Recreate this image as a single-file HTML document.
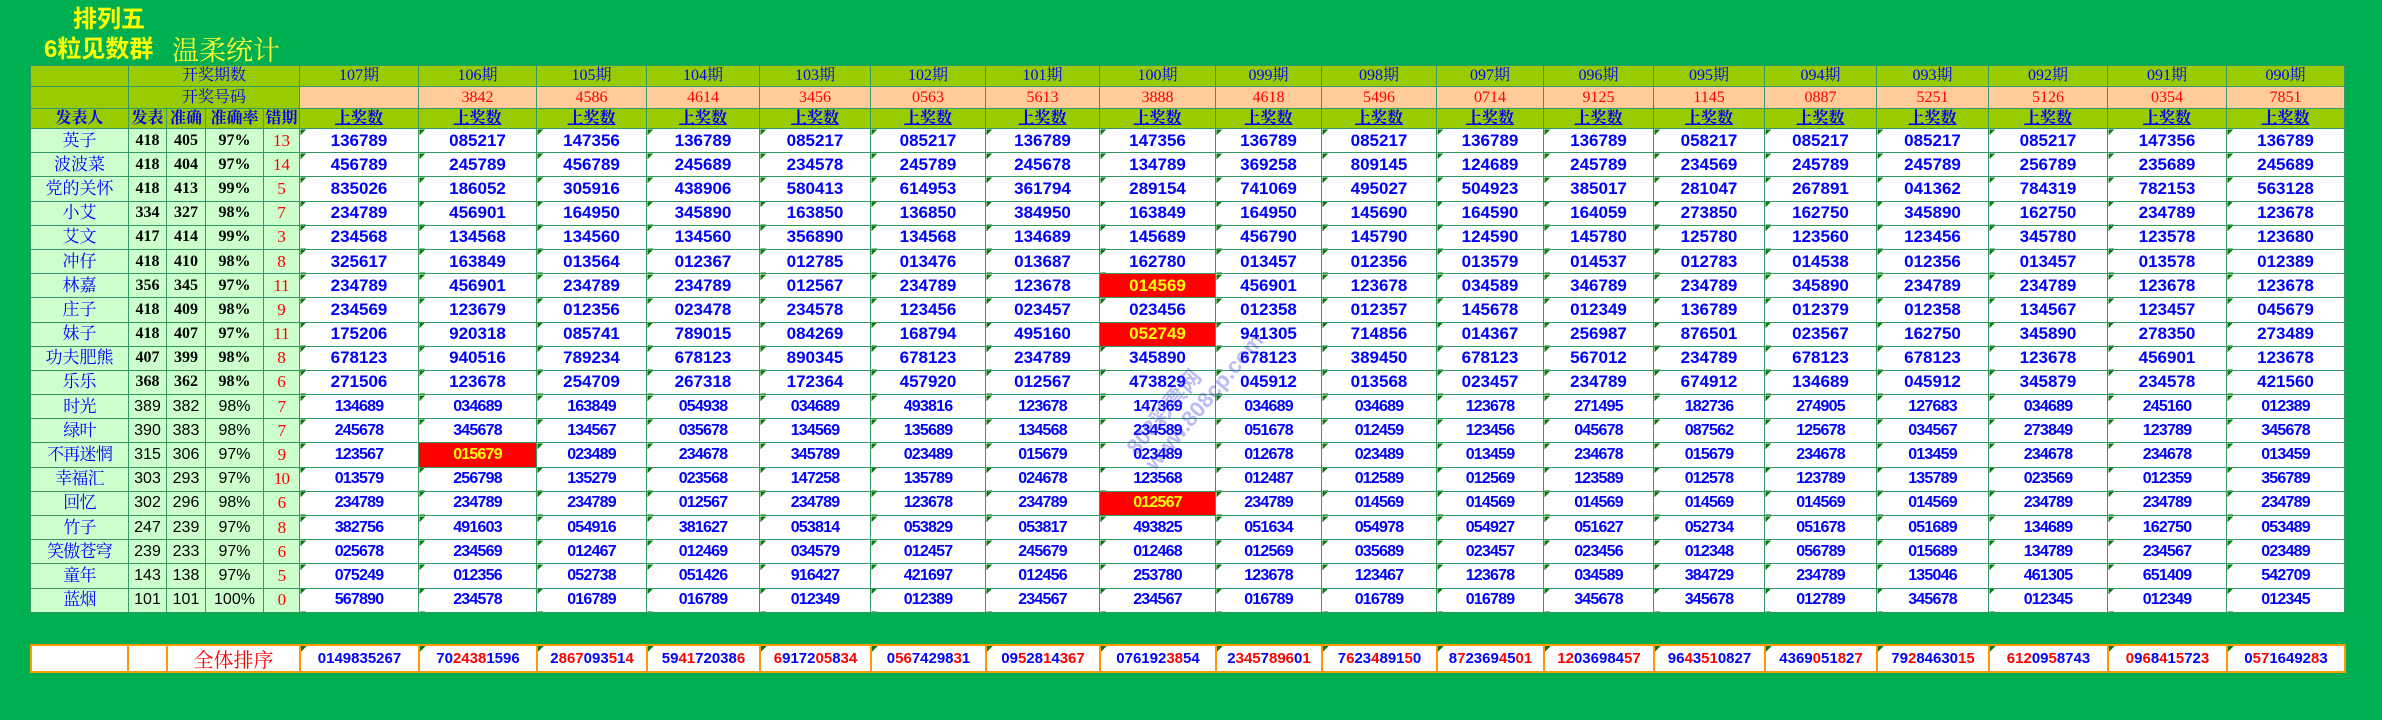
<!DOCTYPE html>
<html><head><meta charset="utf-8">
<style>
html,body{margin:0;padding:0}
body{width:2382px;height:720px;background:#00b050;position:relative;overflow:hidden;font-family:"Liberation Sans","Noto Sans CJK SC",sans-serif}
.t1{position:absolute;left:73px;top:6px;font:bold 24px/28px "Liberation Sans","Noto Sans CJK SC",sans-serif;color:#ffff00}
.t2{position:absolute;left:44px;top:36px;font:bold 24px/28px "Liberation Sans","Noto Sans CJK SC",sans-serif;color:#ffff00}
.t3{position:absolute;left:172px;top:34px;font:27px/30px "Noto Serif CJK SC",serif;color:#ffff33}
table{border-collapse:collapse;table-layout:fixed;position:absolute;left:30px}
#m{top:65px}
#m td{border:1px solid #339966;text-align:center;padding:0;overflow:hidden;white-space:nowrap;line-height:18px}
.h td{background:#99cc00;color:#0000ff;font:16px/18px "Liberation Serif","Noto Serif CJK SC",serif}
tr.h{height:21px}
tr.h2{height:22px}
tr.h3{height:20px}
.h2 td{background:#ffcc99;color:#ff0000}
.h2 td.g{background:#99cc00;color:#0000ff}
.h3 td{font-weight:bold}
.h3 td.u{text-decoration:underline}
tr.d{height:24.2px}
tr.d td{background:#fff;color:#0000ff;font:bold 17px/18px "Liberation Sans",sans-serif;background-image:linear-gradient(135deg,#0a7a0a 4px,transparent 4px)}
tr.d td:nth-child(-n+5){background:#ccffcc;background-image:none;color:#000;font:bold 16px/18px "Liberation Serif","Noto Serif CJK SC",serif}
tr.d td:nth-child(1){color:#0000ff;font:17px/18px "Liberation Serif","Noto Serif CJK SC",serif;border:1px solid #000}
tr.d td:nth-child(5){color:#ff0000;font-weight:normal;font-size:17px}
tr.d td.r{background:#ff0000;color:#ffff00}
tr.c td{font-size:16px;letter-spacing:-0.8px}
tr.c td:nth-child(2),tr.c td:nth-child(3),tr.c td:nth-child(4){font-weight:normal;font-family:"Liberation Sans",sans-serif;font-size:16px;letter-spacing:0}
#b{top:644px}
#b tr{height:27px}
#b td{border:2px solid #ff9900;background:#fff;color:#0000ff;text-align:center;font:bold 15px/18px "Liberation Sans",sans-serif;padding:0;background-image:linear-gradient(135deg,#0a7a0a 4px,transparent 4px)}
#b td.x{background-image:none}
#b td.q{color:#ff0000;font:20px/22px "Noto Serif CJK SC",serif;background-image:none}
#b i{font-style:normal;color:#ff0000}
.wm{position:absolute;left:1110px;top:370px;transform:rotate(-50deg);color:rgba(60,60,230,0.35);font:bold 22px "Liberation Sans","Noto Sans CJK SC",sans-serif;line-height:24px;white-space:nowrap}
</style></head><body>
<div class="t1">排列五</div>
<div class="t2">6粒见数群</div>
<div class="t3">温柔统计</div>
<table id="m">
<colgroup><col style="width:98px"><col style="width:38px"><col style="width:39px"><col style="width:58px"><col style="width:36px"><col style="width:119px"><col style="width:118px"><col style="width:110px"><col style="width:113px"><col style="width:111px"><col style="width:115px"><col style="width:114px"><col style="width:116px"><col style="width:106px"><col style="width:115px"><col style="width:107px"><col style="width:110px"><col style="width:111px"><col style="width:112px"><col style="width:112px"><col style="width:119px"><col style="width:119px"><col style="width:118px"></colgroup>
<tr class="h"><td></td><td colspan="4">开奖期数</td><td>107期</td><td>106期</td><td>105期</td><td>104期</td><td>103期</td><td>102期</td><td>101期</td><td>100期</td><td>099期</td><td>098期</td><td>097期</td><td>096期</td><td>095期</td><td>094期</td><td>093期</td><td>092期</td><td>091期</td><td>090期</td></tr>
<tr class="h h2"><td class="g"></td><td class="g" colspan="4">开奖号码</td><td></td><td>3842</td><td>4586</td><td>4614</td><td>3456</td><td>0563</td><td>5613</td><td>3888</td><td>4618</td><td>5496</td><td>0714</td><td>9125</td><td>1145</td><td>0887</td><td>5251</td><td>5126</td><td>0354</td><td>7851</td></tr>
<tr class="h h3"><td>发表人</td><td>发表</td><td>准确</td><td>准确率</td><td>错期</td><td class="u">上奖数</td><td class="u">上奖数</td><td class="u">上奖数</td><td class="u">上奖数</td><td class="u">上奖数</td><td class="u">上奖数</td><td class="u">上奖数</td><td class="u">上奖数</td><td class="u">上奖数</td><td class="u">上奖数</td><td class="u">上奖数</td><td class="u">上奖数</td><td class="u">上奖数</td><td class="u">上奖数</td><td class="u">上奖数</td><td class="u">上奖数</td><td class="u">上奖数</td><td class="u">上奖数</td></tr>
<tr class="d"><td>英子</td><td>418</td><td>405</td><td>97%</td><td>13</td><td>136789</td><td>085217</td><td>147356</td><td>136789</td><td>085217</td><td>085217</td><td>136789</td><td>147356</td><td>136789</td><td>085217</td><td>136789</td><td>136789</td><td>058217</td><td>085217</td><td>085217</td><td>085217</td><td>147356</td><td>136789</td></tr>
<tr class="d"><td>波波菜</td><td>418</td><td>404</td><td>97%</td><td>14</td><td>456789</td><td>245789</td><td>456789</td><td>245689</td><td>234578</td><td>245789</td><td>245678</td><td>134789</td><td>369258</td><td>809145</td><td>124689</td><td>245789</td><td>234569</td><td>245789</td><td>245789</td><td>256789</td><td>235689</td><td>245689</td></tr>
<tr class="d"><td>党的关怀</td><td>418</td><td>413</td><td>99%</td><td>5</td><td>835026</td><td>186052</td><td>305916</td><td>438906</td><td>580413</td><td>614953</td><td>361794</td><td>289154</td><td>741069</td><td>495027</td><td>504923</td><td>385017</td><td>281047</td><td>267891</td><td>041362</td><td>784319</td><td>782153</td><td>563128</td></tr>
<tr class="d"><td>小艾</td><td>334</td><td>327</td><td>98%</td><td>7</td><td>234789</td><td>456901</td><td>164950</td><td>345890</td><td>163850</td><td>136850</td><td>384950</td><td>163849</td><td>164950</td><td>145690</td><td>164590</td><td>164059</td><td>273850</td><td>162750</td><td>345890</td><td>162750</td><td>234789</td><td>123678</td></tr>
<tr class="d"><td>艾文</td><td>417</td><td>414</td><td>99%</td><td>3</td><td>234568</td><td>134568</td><td>134560</td><td>134560</td><td>356890</td><td>134568</td><td>134689</td><td>145689</td><td>456790</td><td>145790</td><td>124590</td><td>145780</td><td>125780</td><td>123560</td><td>123456</td><td>345780</td><td>123578</td><td>123680</td></tr>
<tr class="d"><td>冲仔</td><td>418</td><td>410</td><td>98%</td><td>8</td><td>325617</td><td>163849</td><td>013564</td><td>012367</td><td>012785</td><td>013476</td><td>013687</td><td>162780</td><td>013457</td><td>012356</td><td>013579</td><td>014537</td><td>012783</td><td>014538</td><td>012356</td><td>013457</td><td>013578</td><td>012389</td></tr>
<tr class="d"><td>林嘉</td><td>356</td><td>345</td><td>97%</td><td>11</td><td>234789</td><td>456901</td><td>234789</td><td>234789</td><td>012567</td><td>234789</td><td>123678</td><td class="r">014569</td><td>456901</td><td>123678</td><td>034589</td><td>346789</td><td>234789</td><td>345890</td><td>234789</td><td>234789</td><td>123678</td><td>123678</td></tr>
<tr class="d"><td>庄子</td><td>418</td><td>409</td><td>98%</td><td>9</td><td>234569</td><td>123679</td><td>012356</td><td>023478</td><td>234578</td><td>123456</td><td>023457</td><td>023456</td><td>012358</td><td>012357</td><td>145678</td><td>012349</td><td>136789</td><td>012379</td><td>012358</td><td>134567</td><td>123457</td><td>045679</td></tr>
<tr class="d"><td>妹子</td><td>418</td><td>407</td><td>97%</td><td>11</td><td>175206</td><td>920318</td><td>085741</td><td>789015</td><td>084269</td><td>168794</td><td>495160</td><td class="r">052749</td><td>941305</td><td>714856</td><td>014367</td><td>256987</td><td>876501</td><td>023567</td><td>162750</td><td>345890</td><td>278350</td><td>273489</td></tr>
<tr class="d"><td>功夫肥熊</td><td>407</td><td>399</td><td>98%</td><td>8</td><td>678123</td><td>940516</td><td>789234</td><td>678123</td><td>890345</td><td>678123</td><td>234789</td><td>345890</td><td>678123</td><td>389450</td><td>678123</td><td>567012</td><td>234789</td><td>678123</td><td>678123</td><td>123678</td><td>456901</td><td>123678</td></tr>
<tr class="d"><td>乐乐</td><td>368</td><td>362</td><td>98%</td><td>6</td><td>271506</td><td>123678</td><td>254709</td><td>267318</td><td>172364</td><td>457920</td><td>012567</td><td>473829</td><td>045912</td><td>013568</td><td>023457</td><td>234789</td><td>674912</td><td>134689</td><td>045912</td><td>345879</td><td>234578</td><td>421560</td></tr>
<tr class="d c"><td>时光</td><td>389</td><td>382</td><td>98%</td><td>7</td><td>134689</td><td>034689</td><td>163849</td><td>054938</td><td>034689</td><td>493816</td><td>123678</td><td>147369</td><td>034689</td><td>034689</td><td>123678</td><td>271495</td><td>182736</td><td>274905</td><td>127683</td><td>034689</td><td>245160</td><td>012389</td></tr>
<tr class="d c"><td>绿叶</td><td>390</td><td>383</td><td>98%</td><td>7</td><td>245678</td><td>345678</td><td>134567</td><td>035678</td><td>134569</td><td>135689</td><td>134568</td><td>234589</td><td>051678</td><td>012459</td><td>123456</td><td>045678</td><td>087562</td><td>125678</td><td>034567</td><td>273849</td><td>123789</td><td>345678</td></tr>
<tr class="d c"><td>不再迷惘</td><td>315</td><td>306</td><td>97%</td><td>9</td><td>123567</td><td class="r">015679</td><td>023489</td><td>234678</td><td>345789</td><td>023489</td><td>015679</td><td>023489</td><td>012678</td><td>023489</td><td>013459</td><td>234678</td><td>015679</td><td>234678</td><td>013459</td><td>234678</td><td>234678</td><td>013459</td></tr>
<tr class="d c"><td>幸福汇</td><td>303</td><td>293</td><td>97%</td><td>10</td><td>013579</td><td>256798</td><td>135279</td><td>023568</td><td>147258</td><td>135789</td><td>024678</td><td>123568</td><td>012487</td><td>012589</td><td>012569</td><td>123589</td><td>012578</td><td>123789</td><td>135789</td><td>023569</td><td>012359</td><td>356789</td></tr>
<tr class="d c"><td>回忆</td><td>302</td><td>296</td><td>98%</td><td>6</td><td>234789</td><td>234789</td><td>234789</td><td>012567</td><td>234789</td><td>123678</td><td>234789</td><td class="r">012567</td><td>234789</td><td>014569</td><td>014569</td><td>014569</td><td>014569</td><td>014569</td><td>014569</td><td>234789</td><td>234789</td><td>234789</td></tr>
<tr class="d c"><td>竹子</td><td>247</td><td>239</td><td>97%</td><td>8</td><td>382756</td><td>491603</td><td>054916</td><td>381627</td><td>053814</td><td>053829</td><td>053817</td><td>493825</td><td>051634</td><td>054978</td><td>054927</td><td>051627</td><td>052734</td><td>051678</td><td>051689</td><td>134689</td><td>162750</td><td>053489</td></tr>
<tr class="d c"><td>笑傲苍穹</td><td>239</td><td>233</td><td>97%</td><td>6</td><td>025678</td><td>234569</td><td>012467</td><td>012469</td><td>034579</td><td>012457</td><td>245679</td><td>012468</td><td>012569</td><td>035689</td><td>023457</td><td>023456</td><td>012348</td><td>056789</td><td>015689</td><td>134789</td><td>234567</td><td>023489</td></tr>
<tr class="d c"><td>童年</td><td>143</td><td>138</td><td>97%</td><td>5</td><td>075249</td><td>012356</td><td>052738</td><td>051426</td><td>916427</td><td>421697</td><td>012456</td><td>253780</td><td>123678</td><td>123467</td><td>123678</td><td>034589</td><td>384729</td><td>234789</td><td>135046</td><td>461305</td><td>651409</td><td>542709</td></tr>
<tr class="d c"><td>蓝烟</td><td>101</td><td>101</td><td>100%</td><td>0</td><td>567890</td><td>234578</td><td>016789</td><td>016789</td><td>012349</td><td>012389</td><td>234567</td><td>234567</td><td>016789</td><td>016789</td><td>016789</td><td>345678</td><td>345678</td><td>012789</td><td>345678</td><td>012345</td><td>012349</td><td>012345</td></tr>
</table>
<div class="wm">808彩票网<br>www.808cp.com</div>
<table id="b">
<colgroup><col style="width:97px"><col style="width:39px"><col style="width:133px"><col style="width:119px"><col style="width:118px"><col style="width:110px"><col style="width:113px"><col style="width:111px"><col style="width:115px"><col style="width:114px"><col style="width:116px"><col style="width:106px"><col style="width:115px"><col style="width:107px"><col style="width:110px"><col style="width:111px"><col style="width:112px"><col style="width:112px"><col style="width:119px"><col style="width:119px"><col style="width:118px"></colgroup>
<tr><td class="x"></td><td class="x"></td><td class="q">全体排序</td>
<td>0149835267</td>
<td>70<i>2438</i>1596</td>
<td>2<i>867</i>093<i>5</i>1<i>4</i></td>
<td>59<i>41</i>72038<i>6</i></td>
<td><i>6</i>9172<i>0</i><i>5</i>8<i>34</i></td>
<td>0<i>56</i>74298<i>3</i>1</td>
<td>09<i>5</i>28<i>1</i>4<i>367</i></td>
<td>076192<i>38</i>54</td>
<td>2<i>345</i>7<i>896</i>0<i>1</i></td>
<td>7<i>6</i>23<i>4</i>891<i>5</i>0</td>
<td>8<i>7</i>2369<i>4</i>5<i>01</i></td>
<td><i>12</i>036984<i>57</i></td>
<td>96<i>4</i>3<i>51</i>0827</td>
<td>4369<i>0</i>51<i>8</i>2<i>7</i></td>
<td>79<i>2</i>84630<i>15</i></td>
<td><i>612</i>09<i>5</i>8743</td>
<td><i>0</i>9<i>6</i>8<i>4</i>1<i>5</i>72<i>3</i></td>
<td>0<i>57</i>16492<i>8</i>3</td>
</tr></table>
</body></html>
